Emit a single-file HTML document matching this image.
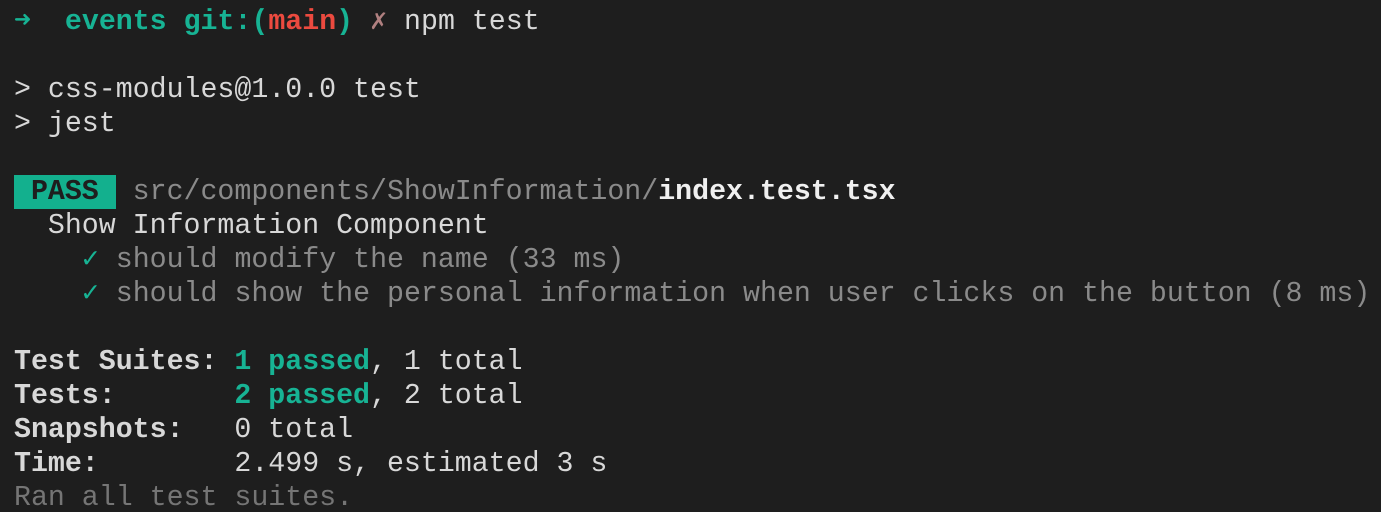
<!DOCTYPE html>
<html><head><meta charset="utf-8"><style>
html,body{margin:0;padding:0;background:#1e1e1e;width:1381px;height:512px;overflow:hidden}
pre{margin:0;padding:5px 0 0 14px;font-family:"Liberation Mono","DejaVu Sans Mono",monospace;font-size:28.25px;line-height:34px;color:#d8d8d8;white-space:pre}
.t{color:#17b394}.r{color:#ec4a3f}.b{font-weight:bold}.g{color:#8a8a8a}.d{color:#757575}.w{color:#f0f0f0}
.x{color:#b08080}
.pass{background:#13b08e;color:#1e1e1e;font-weight:bold;display:inline-block;height:34px}
</style></head><body><pre><span class="t b">➜  events git:(</span><span class="r b">main</span><span class="t b">)</span> <span class="x">✗</span> npm test

&gt; css-modules@1.0.0 test
&gt; jest

<span class="pass"> PASS </span> <span class="g">src/components/ShowInformation/</span><span class="b w">index.test.tsx</span>
  Show Information Component
    <span class="t">✓</span> <span class="g">should modify the name (33 ms)</span>
    <span class="t">✓</span> <span class="g">should show the personal information when user clicks on the button (8 ms)</span>

<span class="b">Test Suites: </span><span class="t b">1 passed</span>, 1 total
<span class="b">Tests:       </span><span class="t b">2 passed</span>, 2 total
<span class="b">Snapshots:   </span>0 total
<span class="b">Time:        </span>2.499 s, estimated 3 s
<span class="d">Ran all test suites.</span></pre></body></html>
